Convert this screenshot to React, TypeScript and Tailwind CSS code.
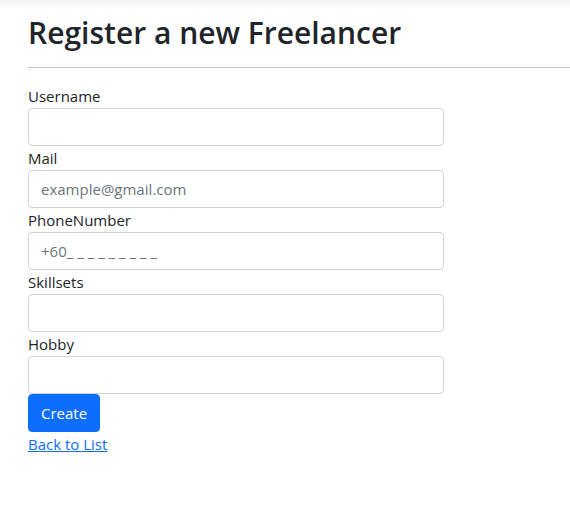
export default function App() {
  const fields = [
    { label: "Username", placeholder: "" },
    { label: "Mail", placeholder: "example@gmail.com" },
    { label: "PhoneNumber", placeholder: "+60_ _ _ _ _ _ _ _ _" },
    { label: "Skillsets", placeholder: "" },
    { label: "Hobby", placeholder: "" },
  ];

  return (
    <div className="min-h-[522px] bg-white text-[#212529] font-['Open_Sans',sans-serif]">
      {/* faint navbar shadow */}
      <div className="h-[8px] bg-gradient-to-b from-[#f1f1f1] to-white" />

      <div className="pl-[28px] pt-[6px]">
        <h1 className="text-[30px] font-semibold leading-[37px] h-[37px]">Register a new Freelancer</h1>
        <hr className="mt-[16px] mb-[16px] border-0 h-px bg-[#c8c8c8]" />

        <form className="w-[416px]" onSubmit={(e) => e.preventDefault()}>
          {fields.map((f) => (
            <div key={f.label}>
              <label className="block text-[15px] leading-6">{f.label}</label>
              <input
                type="text"
                placeholder={f.placeholder}
                className="block w-full h-[38px] px-3 text-[15px] border border-[#ced4da] rounded-[4px] placeholder:text-[#6c757d] outline-none"
              />
            </div>
          ))}
          <button
            type="submit"
            className="h-[38px] px-3 bg-[#0d6efd] text-white text-[15px] rounded-[4px] border border-[#0d6efd]"
          >
            Create
          </button>
        </form>
        <a href="#" className="inline-block text-[15px] text-[#0d6efd] underline leading-6">
          Back to List
        </a>
      </div>
    </div>
  );
}
